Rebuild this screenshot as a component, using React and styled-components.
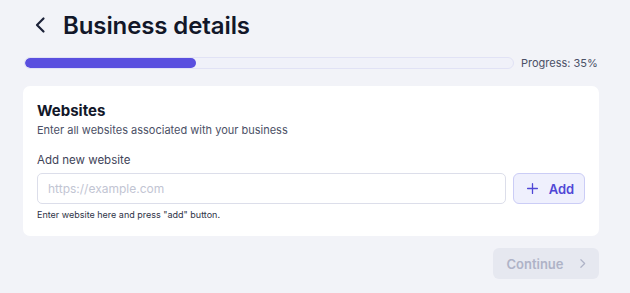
import React from "react";
import styled, { createGlobalStyle } from "styled-components";

const Global = createGlobalStyle`
  html, body { margin: 0; padding: 0; background: #f2f3f8; }
  body { font-family: Inter, "Noto Sans", sans-serif; -webkit-font-smoothing: antialiased; }
  * { box-sizing: border-box; }
`;

const Page = styled.div`
  width: 576px;
  margin-left: 23px;
  padding-top: 10px;
  display: flex;
  flex-direction: column;
`;

const Header = styled.div`
  display: flex;
  align-items: center;
  height: 30px;
  gap: 16px;
  padding-left: 10px;
`;

const BackButton = styled.button`
  border: 0;
  background: none;
  padding: 0;
  width: 14px;
  height: 18px;
  display: flex;
  align-items: center;
  justify-content: center;
  color: #1c2238;
  cursor: pointer;
`;

const Title = styled.h1`
  margin: 0;
  font-size: 24px;
  font-weight: 600;
  color: #121729;
  letter-spacing: -0.1px;
`;

const ProgressRow = styled.div`
  margin-top: 16px;
  display: flex;
  align-items: center;
  gap: 7px;
  padding-left: 1px;
`;

const Track = styled.div`
  width: 490px;
  height: 12px;
  border-radius: 6px;
  background: #f0f1f9;
  border: 1px solid #e1e2f5;
  overflow: hidden;
  display: flex;
`;

const Fill = styled.div`
  height: 100%;
  background: #5a4fdf;
  border-radius: 6px;
`;

const ProgressLabel = styled.span`
  font-size: 11px;
  color: #4b5066;
`;

const Card = styled.section`
  margin-top: 16px;
  background: #ffffff;
  border-radius: 7px;
  padding: 16px 14px 16px 14px;
  display: flex;
  flex-direction: column;
`;

const CardTitle = styled.h2`
  margin: 0;
  font-size: 15px;
  line-height: 18px;
  font-weight: 700;
  color: #121729;
`;

const CardSubtitle = styled.p`
  margin: 3px 0 0;
  font-size: 11px;
  line-height: 14px;
  color: #4b5066;
`;

const FieldLabel = styled.label`
  margin-top: 16px;
  font-size: 11.5px;
  line-height: 14px;
  color: #3f4459;
`;

const InputRow = styled.div`
  margin-top: 6px;
  display: flex;
  gap: 7px;
`;

const Input = styled.input`
  flex: 1;
  height: 31px;
  border: 1px solid #dcdeea;
  border-radius: 5px;
  padding: 0 10px;
  font-family: inherit;
  font-size: 12px;
  color: #121729;
  outline: none;
  &::placeholder { color: #c2c5d3; }
`;

const AddButton = styled.button`
  width: 72px;
  height: 31px;
  border: 1px solid #cbcdf6;
  background: #eff0fd;
  border-radius: 6px;
  display: flex;
  align-items: center;
  justify-content: center;
  gap: 10px;
  color: #4f47d6;
  font-family: inherit;
  font-size: 13px;
  font-weight: 600;
  padding: 0 0 0 2px;
  cursor: pointer;
`;

const Helper = styled.p`
  margin: 5px 0 0;
  font-size: 9px;
  line-height: 11px;
  color: #2e3347;
`;

const Footer = styled.div`
  margin-top: 12px;
  display: flex;
  justify-content: flex-end;
`;

const ContinueButton = styled.button`
  width: 106px;
  height: 31px;
  border: 0;
  border-radius: 6px;
  background: #e6e8f0;
  color: #afb3c7;
  font-family: inherit;
  font-size: 13px;
  font-weight: 600;
  display: flex;
  align-items: center;
  justify-content: center;
  gap: 12px;
  padding: 0 0 0 3px;
`;

const BackIcon = () => (
  <svg width="14" height="18" viewBox="0 0 14 18" fill="none" stroke="currentColor" strokeWidth="2.2" strokeLinecap="round" strokeLinejoin="round">
    <path d="M10.5 2.5L4 9l6.5 6.5" />
  </svg>
);

const NextIcon = () => (
  <svg width="13" height="13" viewBox="0 0 24 24" fill="none" stroke="currentColor" strokeWidth="2.2" strokeLinecap="round" strokeLinejoin="round">
    <path d="M9 5l7 7-7 7" />
  </svg>
);

const Plus = () => (
  <svg width="13" height="13" viewBox="0 0 24 24" fill="none" stroke="currentColor" strokeWidth="2.4" strokeLinecap="round">
    <path d="M12 3v18M3 12h18" />
  </svg>
);

export default function App() {
  const progress = 35;
  return (
    <>
      <Global />
      <Page>
        <Header>
          <BackButton aria-label="Back">
            <BackIcon />
          </BackButton>
          <Title>Business details</Title>
        </Header>
        <ProgressRow>
          <Track>
            <Fill style={{ width: `${progress}%` }} />
          </Track>
          <ProgressLabel>Progress: {progress}%</ProgressLabel>
        </ProgressRow>
        <Card>
          <CardTitle>Websites</CardTitle>
          <CardSubtitle>Enter all websites associated with your business</CardSubtitle>
          <FieldLabel>Add new website</FieldLabel>
          <InputRow>
            <Input placeholder="https://example.com" />
            <AddButton>
              <Plus />
              Add
            </AddButton>
          </InputRow>
          <Helper>Enter website here and press "add" button.</Helper>
        </Card>
        <Footer>
          <ContinueButton disabled>
            Continue
            <NextIcon />
          </ContinueButton>
        </Footer>
      </Page>
    </>
  );
}
